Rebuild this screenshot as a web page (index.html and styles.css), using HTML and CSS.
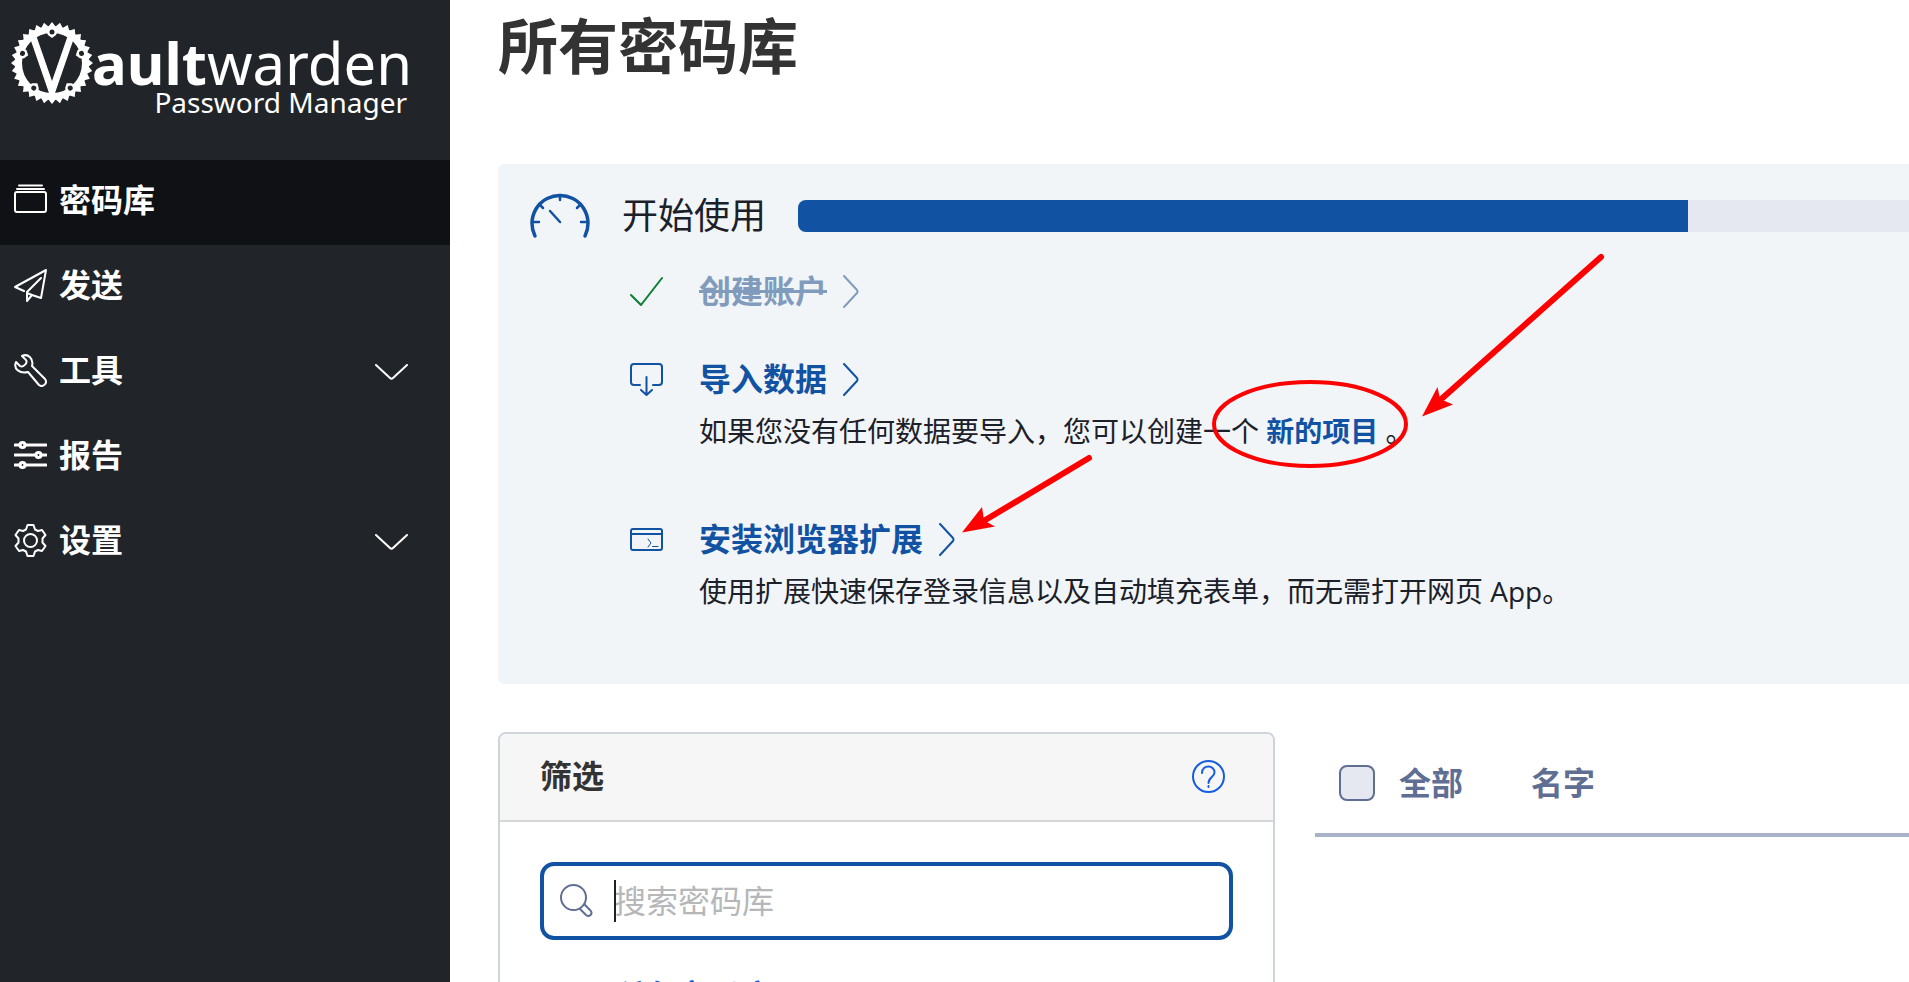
FILE: index.html
```html
<!DOCTYPE html>
<html lang="zh-CN">
<head>
<meta charset="utf-8">
<title>所有密码库 | Vaultwarden</title>
<link rel="stylesheet" href="styles.css">
</head>
<body>
<aside class="sidebar">
    <a class="logo" href="#" aria-label="Vaultwarden">
        <svg width="410" height="104" viewBox="0 0 410 104" fill="#fff">
            <defs>
                <path id="tooth" d="M-4-36 0-41 4-36z"/>
                <g id="teeth">
                    <use href="#tooth"/>
                    <use href="#tooth" transform="rotate(11.25)"/>
                    <use href="#tooth" transform="rotate(22.5)"/>
                    <use href="#tooth" transform="rotate(33.75)"/>
                    <use href="#tooth" transform="rotate(45)"/>
                    <use href="#tooth" transform="rotate(56.25)"/>
                    <use href="#tooth" transform="rotate(67.5)"/>
                    <use href="#tooth" transform="rotate(78.75)"/>
                </g>
                <g id="bolt">
                    <path d="M-6-32h12L4-28 0-25-4-28z" fill="#fff"/>
                    <circle cy="-31" r="2.5" fill="#212529"/>
                </g>
            </defs>
            <g transform="translate(52 47)">
                <circle r="33.5" fill="none" stroke="#fff" stroke-width="7"/>
                <use href="#teeth"/>
                <use href="#teeth" transform="rotate(90)"/>
                <use href="#teeth" transform="rotate(180)"/>
                <use href="#teeth" transform="rotate(270)"/>
                <path d="M-22-25-16-28 0 18 16-28 22-25 3 30H-3z"/>
                <use href="#bolt"/>
                <use href="#bolt" transform="rotate(72)"/>
                <use href="#bolt" transform="rotate(144)"/>
                <use href="#bolt" transform="rotate(216)"/>
                <use href="#bolt" transform="rotate(288)"/>
            </g>
            <text class="logo-name" x="92" y="69"><tspan class="logo-bold">ault</tspan>warden</text>
            <text class="logo-sub" x="407" y="97" text-anchor="end">Password Manager</text>
        </svg>
    </a>
    <nav class="nav">
        <a class="nav-item active" href="#">
            <svg class="icon" viewBox="0 0 33 33" aria-hidden="true"><rect x="1" y="8" width="31" height="20" rx="2"/><path d="M3 5h27M5 1.5h23"/></svg>
            <span>密码库</span>
        </a>
        <a class="nav-item" href="#">
            <svg class="icon" viewBox="0 0 33 33" aria-hidden="true"><path d="M10 22 1 18 32 1 27 29 18 26 13 32V23L27 9M18 26l-5-2"/></svg>
            <span>发送</span>
        </a>
        <a class="nav-item" href="#">
            <svg class="icon" viewBox="0 0 33 33" aria-hidden="true"><path d="M8 2C14-1 20 5 18 12L31 25C34 29 29 34 25 31L14 18C6 20-1 15 2 8L6 12C9 14 14 9 12 6z"/></svg>
            <span>工具</span>
            <svg class="chevron" viewBox="0 0 33 17" aria-hidden="true"><path d="M1 1 15 14q1.5 1.5 3 0L32 1"/></svg>
        </a>
        <a class="nav-item" href="#">
            <svg class="icon" viewBox="0 0 33 33" aria-hidden="true"><path d="M1 6h5m5 0h21M1 16h20m6 0h5M1 26h5m5 0h21" stroke-width="3"/><circle cx="8.5" cy="6" r="2.5" stroke-width="3"/><circle cx="24.5" cy="16" r="2.5" stroke-width="3"/><circle cx="8.5" cy="26" r="2.5" stroke-width="3"/></svg>
            <span>报告</span>
        </a>
        <a class="nav-item" href="#">
            <svg class="icon" viewBox="0 0 33 33" aria-hidden="true"><circle cx="16.5" cy="16.5" r="6.5"/><path d="M13.5 1h6l1.5 4.5 3 1.5 4-1 3.5 5-3 3.5v4l3 3.500-3.500 5-4-1-3 1.500L19.500 32h-6L12 27.500 9 26l-4 1-3.500-5 3-3.500v-4l-3-3.500L5 6l4 1 3-1.500z"/></svg>
            <span>设置</span>
            <svg class="chevron" viewBox="0 0 33 17" aria-hidden="true"><path d="M1 1 15 14q1.5 1.5 3 0L32 1"/></svg>
        </a>
    </nav>
</aside>

<main class="main">
    <h1>所有密码库</h1>

    <section class="onboarding">
        <div class="onboarding-head">
            <svg class="gauge" viewBox="0 0 60 46" aria-hidden="true">
                <path d="M5 43A28 28 0 1 1 55 43" stroke-width="3.5"/>
                <path d="M30 2v5M9 11l4 4M51 11l-4 4M2 29h7M58 29h-7M20 18 30 29" stroke-width="2.5"/>
            </svg>
            <h2>开始使用</h2>
            <div class="progress"><div class="progress-bar" style="width: 80.1%"></div></div>
        </div>
        <ul class="tasks">
            <li>
                <svg class="icon task-icon done-icon" viewBox="0 0 33 33" aria-hidden="true"><path d="M1 20 11 30 32 3"/></svg>
                <a class="task-link done" href="#"><span>创建账户</span><svg class="arrow" viewBox="0 0 16 33" aria-hidden="true"><path d="M1 1 14 15q1 1.5 0 3L1 32"/></svg></a>
            </li>
            <li>
                <svg class="icon task-icon" viewBox="0 0 33 33" aria-hidden="true"><path d="M10 22H4q-3 0-3-3V4q0-3 3-3h25q3 0 3 3v15q0 3-3 3h-6M16.5 14v17M11 27l5.5 5 5.5-5"/></svg>
                <a class="task-link" href="#"><span>导入数据</span><svg class="arrow" viewBox="0 0 16 33" aria-hidden="true"><path d="M1 1 14 15q1 1.5 0 3L1 32"/></svg></a>
                <p>如果您没有任何数据要导入，您可以创建一个 <a href="#">新的项目</a> 。</p>
            </li>
            <li>
                <svg class="icon task-icon" viewBox="0 0 33 33" aria-hidden="true"><rect x="1" y="6" width="31" height="21" rx="2"/><path d="M1 11h31"/><path d="m18 16 3 4-3 4M22.5 23.5H28" stroke-width="1"/></svg>
                <a class="task-link" href="#"><span>安装浏览器扩展</span><svg class="arrow" viewBox="0 0 16 33" aria-hidden="true"><path d="M1 1 14 15q1 1.5 0 3L1 32"/></svg></a>
                <p>使用扩展快速保存登录信息以及自动填充表单，而无需打开网页 App。</p>
            </li>
        </ul>
        <!-- pointers over the task list -->
        <svg class="marks" width="1120" height="400" viewBox="0 0 1120 400" aria-hidden="true">
            <ellipse cx="812" cy="260" rx="96" ry="42"/>
            <path d="M1103 93 940 238M591 294 484 358" stroke-width="6"/>
            <path class="head" d="M924 252.5 939.5 223 942 235 955 240.5zM464 368.5 484 343 486 356.5 497 362.5z"/>
        </svg>
    </section>

    <div class="vault">
        <section class="filter">
            <header>
                <h3>筛选</h3>
                <a href="#" aria-label="帮助">
                    <svg class="icon" viewBox="0 0 33 33" aria-hidden="true"><circle cx="16.5" cy="16.5" r="15.5"/><path d="M10 13C10 4 23 5 22.5 12.5 22.5 17 16.5 17 16.5 23M16.5 26v1"/></svg>
                </a>
            </header>
            <div class="filter-body">
                <div class="search">
                    <svg class="icon" viewBox="0 0 33 33" aria-hidden="true"><circle cx="13.5" cy="13.5" r="12.5"/><path d="m20 25 6 6q2.5 2 4.5 0t0-4.5l-6-6"/></svg>
                    <input type="text" placeholder="搜索密码库" aria-label="搜索密码库">
                    <span class="caret"></span>
                </div>
                <a class="filter-link" href="#">所有密码库</a>
            </div>
        </section>
        <table class="items">
            <thead>
                <tr>
                    <th class="check"><label><input type="checkbox"> 全部</label></th>
                    <th>名字</th>
                </tr>
            </thead>
        </table>
    </div>
</main>
</body>
</html>
```

FILE: styles.css
```css
* {box-sizing: border-box;}
body {
    margin: 0;
    display: flex;
    height: 100vh;
    overflow: hidden;
    background: #fff;
    color: #1b2029;
    font-family: "Open Sans", "Noto Sans CJK SC", sans-serif;
    font-size: 28px;
}
a {
    color: #1252a3;
    text-decoration: none;
}
h1, h2, h3, p, ul {
    margin: 0;
    padding: 0;
}
svg {
    display: block;
    flex: none;
}
.icon {
    width: 33px;
    height: 33px;
}
.icon, .chevron, .arrow, .gauge {
    fill: none;
    stroke: currentColor;
    stroke-width: 2;
    stroke-linecap: round;
    stroke-linejoin: round;
}

/* sidebar */
.sidebar {
    flex: none;
    width: 450px;
    background: #212529;
}
.logo {
    display: block;
    height: 160px;
    padding-top: 16px;
}
.logo svg {overflow: visible;}
.logo-name {
    font-family: "Noto Sans", sans-serif;
    font-size: 58px;
}
.logo-bold {font-weight: 700;}
.logo-sub {
    font-family: "Noto Sans", sans-serif;
    font-size: 28px;
}
.nav-item {
    display: flex;
    align-items: center;
    gap: 12px;
    height: 85px;
    padding: 0 42px 5px 14px;
    color: #fff;
    font-size: 32px;
    font-weight: 700;
    line-height: 48px;
}
.nav-item.active {background: #101114;}
.chevron {
    width: 33px;
    height: 17px;
    margin: 4px 0 0 auto;
}

/* content */
.main {
    flex: 1;
    min-width: 0;
    padding-left: 48px;
}
h1 {
    color: #333;
    font-size: 60px;
    line-height: 92px;
    margin-bottom: 72px;
}
.onboarding {
    position: relative;
    padding: 28px 0 50px 32px;
    background: #f1f5f8;
    border-radius: 6px 0 0 6px;
}
.onboarding-head {
    display: flex;
    align-items: center;
    gap: 32px;
    height: 48px;
}
.gauge {
    width: 60px;
    height: 46px;
    color: #1252a3;
}
h2 {
    font-size: 36px;
    font-weight: 400;
    line-height: 48px;
}
.progress {
    flex: 1;
    height: 32px;
    background: #e5e8f0;
    border-radius: 8px 0 0 8px;
    overflow: hidden;
}
.progress-bar {
    height: 100%;
    background: #1252a3;
}
.tasks {
    display: grid;
    gap: 42px;
    margin-top: 28px;
    padding-left: 100px;
    list-style: none;
}
.tasks li {
    display: grid;
    grid-template-columns: 33px 1fr;
    column-gap: 36px;
    align-items: center;
}
.task-icon {color: #1252a3;}
.done-icon {color: #0a7d32;}
.task-link {
    display: flex;
    align-items: center;
    gap: 16px;
    font-size: 32px;
    font-weight: 700;
    line-height: 46px;
}
.task-link.done {color: #819bbd;}
.done span {text-decoration: line-through;}
.arrow {
    width: 16px;
    height: 33px;
}
.tasks p {
    grid-column: 2;
    padding: 8px 0 22px;
    line-height: 42px;
}
.tasks p a {font-weight: 700;}
.marks {
    position: absolute;
    top: 0;
    left: 0;
    fill: none;
    stroke: #f00;
    stroke-width: 4;
    stroke-linecap: round;
    pointer-events: none;
}
.marks .head {
    fill: #f00;
    stroke: none;
}

/* filter card and item list */
.vault {
    display: grid;
    grid-template-columns: 17fr 13fr;
    align-items: start;
    gap: 40px;
    margin-top: 48px;
}
.filter {
    border: 2px solid #ced4dc;
    border-radius: 8px;
    overflow: hidden;
}
.filter header {
    display: flex;
    align-items: center;
    justify-content: space-between;
    height: 88px;
    padding: 0 48px 2px 40px;
    background: #f6f6f6;
    border-bottom: 2px solid #d5d6d8;
}
.filter header a {color: #175ddc;}
h3 {
    color: #333;
    font-size: 32px;
    line-height: 48px;
}
.filter-body {padding: 40px;}
.search {
    position: relative;
    margin-bottom: 32px;
}
.search .icon {
    position: absolute;
    top: 22px;
    left: 20px;
    color: #5f6e93;
}
.search input {
    display: block;
    width: 100%;
    height: 78px;
    padding: 0 20px 2px 70px;
    border: 4px solid #1252a3;
    border-radius: 14px;
    background: #fff;
    font-family: inherit;
    font-size: 32px;
    outline: none;
}
.search input::placeholder {color: #b5b7b9;}
.caret {
    position: absolute;
    top: 18px;
    left: 74px;
    width: 2px;
    height: 42px;
    background: #1b2029;
}
.filter-link {
    display: block;
    padding-left: 72px;
    color: #175ddc;
    font-size: 32px;
    font-weight: 700;
    line-height: 48px;
}
.items {
    width: 100%;
    border-collapse: collapse;
    color: #5f6e93;
    font-size: 32px;
    text-align: left;
}
.items th {
    height: 103px;
    padding: 0;
    border-bottom: 4px solid #a8b3c8;
    line-height: 48px;
}
.items .check {
    width: 216px;
    padding-left: 24px;
}
.check label {
    display: flex;
    align-items: center;
    gap: 24px;
}
.check input {
    appearance: none;
    width: 36px;
    height: 36px;
    margin: 0;
    border: 2px solid #5f6e93;
    border-radius: 8px;
    background: #e5e8f0;
}
```
